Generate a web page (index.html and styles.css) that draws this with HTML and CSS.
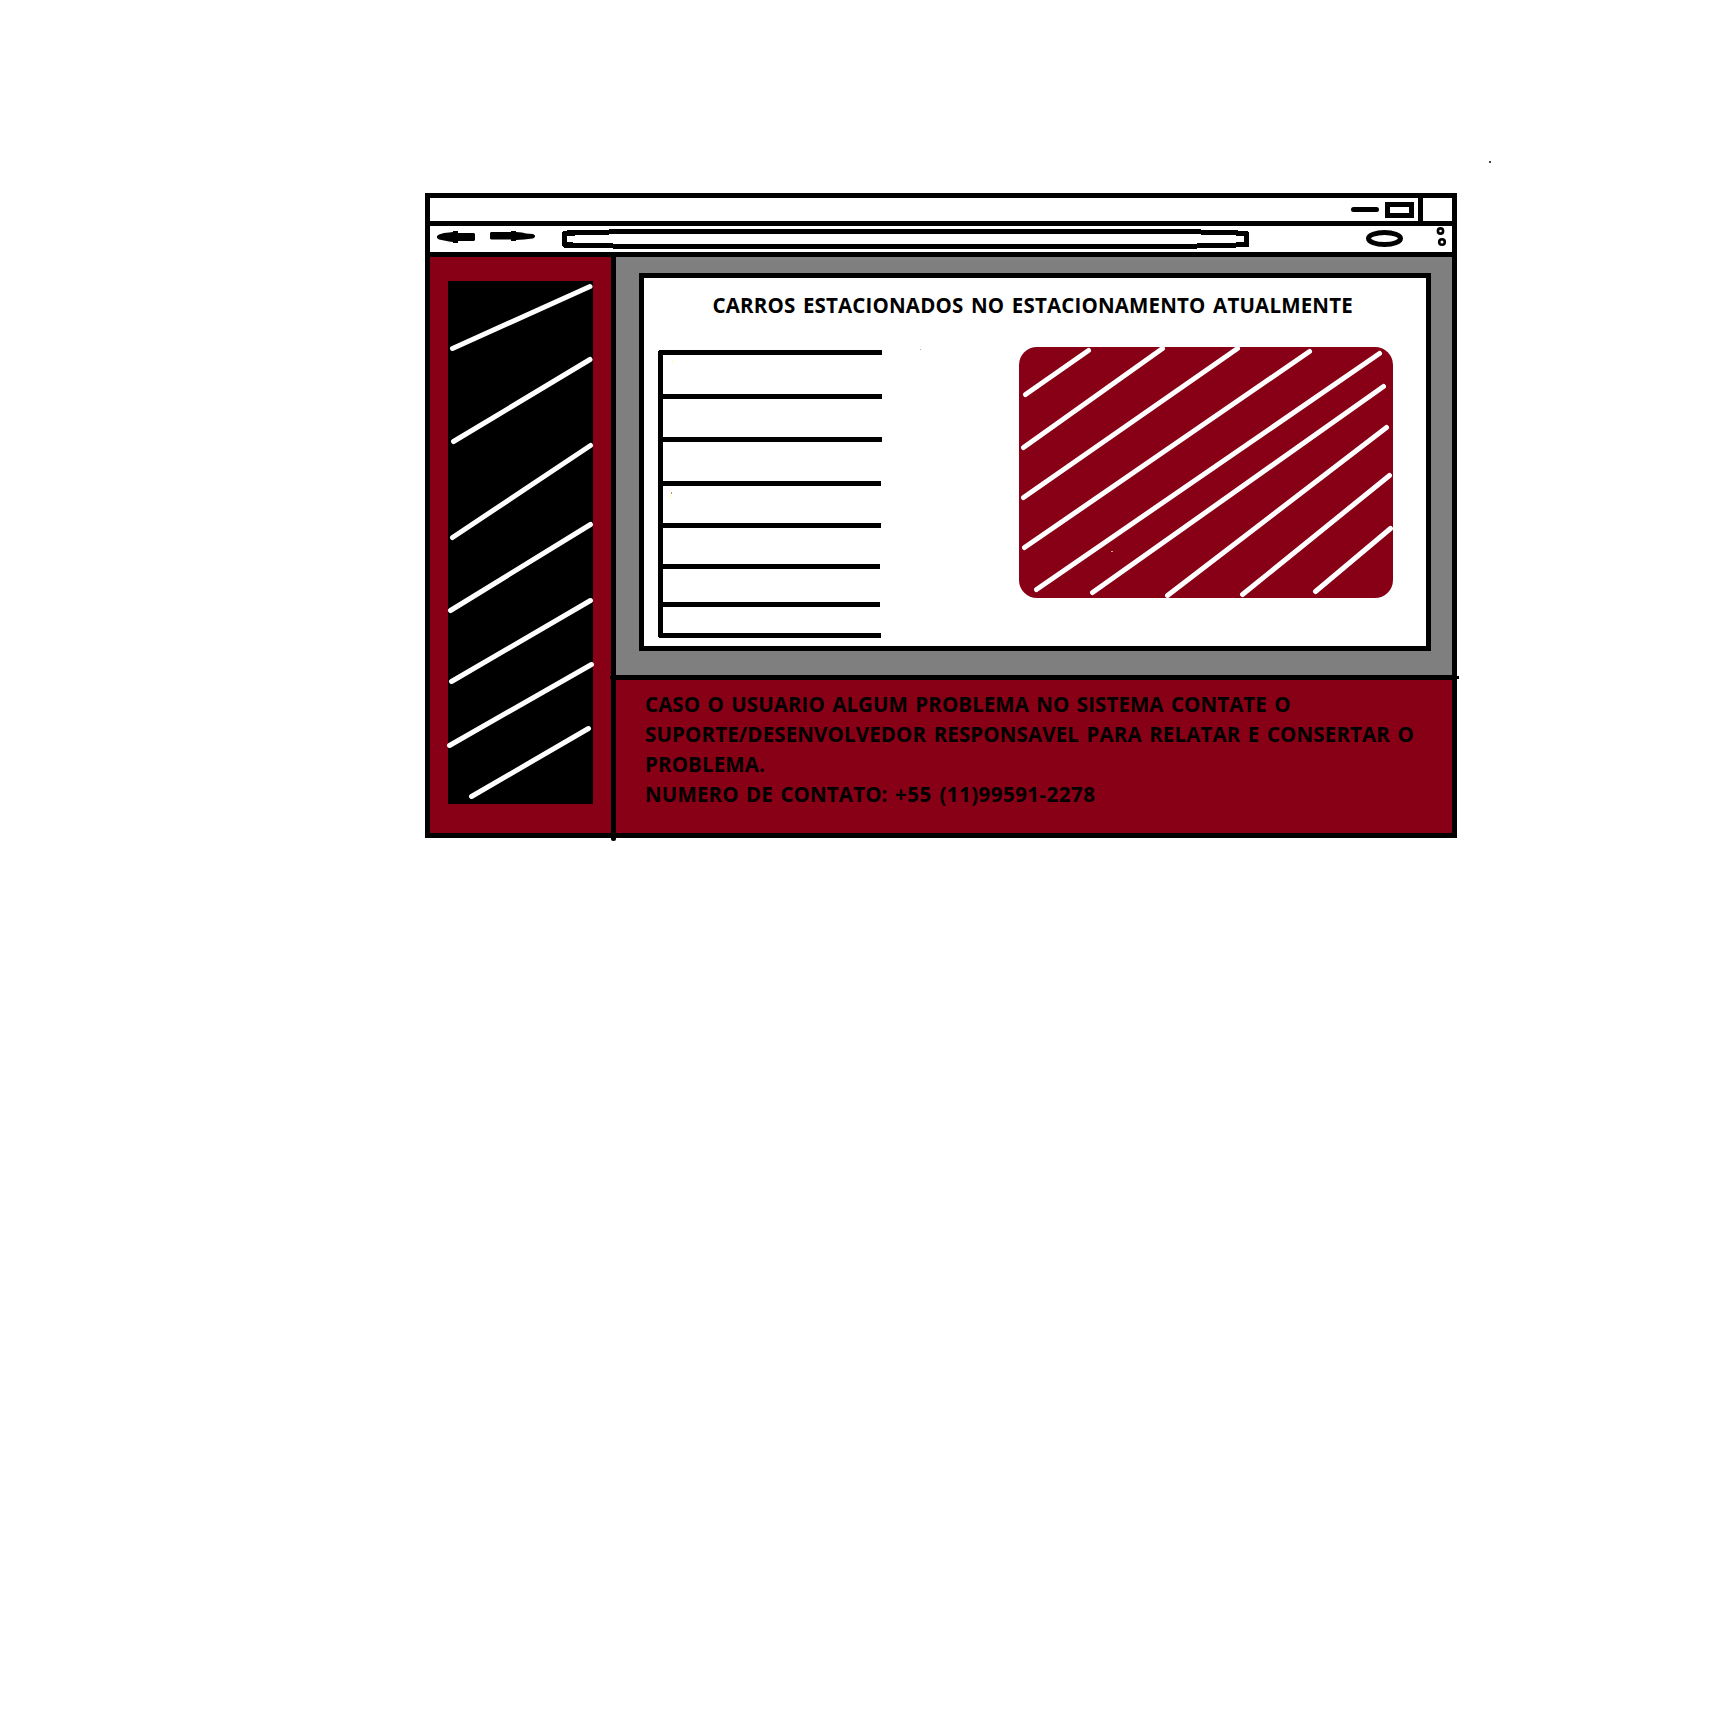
FILE: index.html
```html
<!DOCTYPE html>
<html lang="pt-BR">
<head>
<meta charset="utf-8">
<title>Estacionamento</title>
<link rel="stylesheet" href="styles.css">
</head>
<body>
<i class="speck"></i>
<main class="window">
  <header class="titlebar">
    <svg class="controls" width="80" height="23" viewBox="1343 198 80 23">
      <path d="M1353.500 209.500H1376.500" stroke-linecap="round"/>
      <rect x="1387.500" y="204.500" width="24" height="11"/>
      <path d="M1420.500 198V221"/>
    </svg>
  </header>
  <nav class="toolbar">
    <svg width="1022" height="26" viewBox="430 226 1022 26">
      <path class="solid" d="M437 236L439 234.500L444 233L449 232.500L453 232V231H458V233H474L475 234V240L474 241H458V243H453V242L449 241.500L444 240.500L439 239.500L437 238Z"/>
      <path class="solid" d="M490 233L491 232H511V231H516V232L522 232.500L526 233.500L533 234L535 235.500V237L533 238.500L524 239.500L516 240V241H511V239.500H491L490 238.500Z"/>
      <path class="crisp" d="M564.500 232V246M563 233.500H575M567 232.500H609M609 231.500H1201M1201 232.500H1238M1236 233.500H1248M1246.500 232V246M563 244.500H573M564 245.500H613M613 246.500H1197M1197 245.500H1236M1236 244.500H1249"/>
      <ellipse cx="1384.500" cy="238.500" rx="16" ry="6"/>
      <circle class="thin" cx="1440.500" cy="231" r="2.600"/>
      <circle class="thin" cx="1442" cy="242" r="2.800"/>
    </svg>
  </nav>
  <div class="body">
    <aside class="sidebar">
      <svg class="menu" width="145" height="523" viewBox="448 281 145 523">
        <path d="M452.500 348.500L590 286.500M453.500 441.500L590 359.500M452.500 537.500L590.500 445.500M450.500 610.500L590.500 524.500M451.500 681.500L590.500 600.500M449.500 745.500L591.500 664.500M471.500 796.500L588.500 728.500"/>
      </svg>
    </aside>
    <div class="content">
      <section class="stage">
        <div class="card">
          <h1 class="title">CARROS ESTACIONADOS NO ESTACIONAMENTO ATUALMENTE</h1>
          <div class="panels">
            <svg class="list" width="224" height="288" viewBox="658 350 224 288">
              <path d="M660.500 351V637M659 352.500H882M663 396.500H882M663 439.500H882M663 483.500H881M663 525.500H881M663 566.500H880M663 604.500H880M659 635.500H881"/>
              <path class="dust-blue" d="M920 349.500H921"/>
              <path class="dust-orange" d="M671 493H672"/>
              <path class="dust-yellow" d="M672 362H673M670 496.500H671"/>
            </svg>
            <svg class="photo" width="374" height="251" viewBox="1019 347 374 251">
              <path d="M1025.500 394.500L1088.500 350.500M1023.500 447.500L1162.500 348.500M1023.500 497.500L1237.500 348.500M1024.500 547.500L1309.500 351.500M1036.500 589.500L1379.500 353.500M1092.500 592.500L1383.500 386.500M1167.500 595.500L1386.500 427.500M1242.500 594.500L1389.500 475.500M1315.500 591.500L1390.500 528.500"/>
              <path class="dust-tan" d="M1111 551.500H1113"/>
            </svg>
          </div>
        </div>
      </section>
      <footer class="support">
        <p class="line intro">CASO O USUARIO ALGUM PROBLEMA NO SISTEMA CONTATE O</p>
        <p class="line">SUPORTE/DESENVOLVEDOR RESPONSAVEL PARA RELATAR E CONSERTAR O</p>
        <p class="line">PROBLEMA.</p>
        <p class="line">NUMERO DE CONTATO: <span class="phone">+55 (11)99591-2278</span></p>
      </footer>
    </div>
  </div>
</main>
</body>
</html>
```
FILE: styles.css
```css
* { box-sizing: border-box; }
body { display: flow-root; margin: 0; min-height: 1714px; background: #fff; color: #000; font-family: "Open Sans", "Noto Sans", sans-serif; }
svg { display: block; overflow: visible; fill: none; stroke: #000; stroke-width: 5; }
.speck { position: absolute; left: 1489px; top: 161px; width: 2px; height: 2px; background: #444; }
.window { width: 1032px; height: 645px; margin: 193px 0 0 425px; border: 5px solid #000; display: flex; flex-direction: column; }
.titlebar { height: 28px; border-bottom: 5px solid #000; display: flex; justify-content: flex-end; padding-right: 29px; }
.toolbar { height: 31px; border-bottom: 5px solid #000; }
.solid { fill: #000; stroke: none; }
.crisp { shape-rendering: crispEdges; }
.thin { stroke-width: 2.6; }
.body { flex: 1; display: flex; }
.sidebar { position: relative; width: 186px; border-right: 5px solid #000; background: #880015; padding: 24px 18px 29px; }
/* the divider strokes run a little past the frame */
.sidebar::after { content: ""; position: absolute; right: -5px; bottom: -8px; width: 5px; height: 8px; background: #000; border-radius: 0 0 2px 2px; }
.menu { background: #000; stroke: #fff; stroke-linecap: round; }
.content { flex: 1; display: flex; flex-direction: column; }
.stage { position: relative; height: 423px; border-bottom: 5px solid #000; background: #7f7f7f; padding: 16px 21px 24px 23px; }
.stage::after { content: ""; position: absolute; left: -6px; right: -7px; bottom: -4px; height: 3px; background: #000; }
.card { height: 378px; border: 5px solid #000; background: #fff; }
.title, .line { margin: 0; font-size: 20.5px; line-height: 30px; font-weight: 700; letter-spacing: 0.13px; word-spacing: 2px; white-space: nowrap; }
.title { padding: 12px 0 0 68.5px; height: 69px; letter-spacing: 0.17px; }
.intro { letter-spacing: 0.07px; }
.phone { letter-spacing: 0.47px; }
.panels { display: flex; justify-content: space-between; padding: 0 33px 0 14px; }
.list { margin-top: 3px; }
.photo { background: #880015; border-radius: 18px; stroke: #fff; stroke-linecap: round; }
.dust-blue { stroke: #7fb8dc; stroke-width: 1; }
.dust-orange { stroke: #c89040; stroke-width: 2; }
.dust-yellow { stroke: #ffffb0; stroke-width: 3; }
.dust-tan { stroke: #d8a080; stroke-width: 1; stroke-linecap: butt; }
.support { flex: 1; background: #880015; padding: 9px 0 0 29px; }
```
